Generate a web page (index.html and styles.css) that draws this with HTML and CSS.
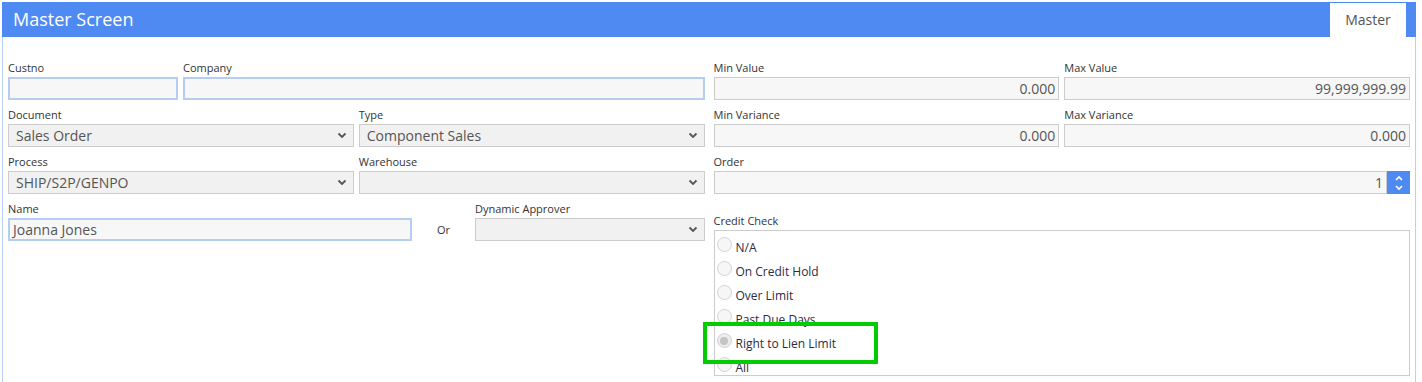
FILE: index.html
```html
<!DOCTYPE html>
<html>
<head>
<meta charset="utf-8">
<link rel="stylesheet" href="styles.css">
</head>
<body>
<div class="panel">
  <div class="header">
    <div class="title">Master Screen</div>
    <div class="tab">Master</div>
  </div>
  <div class="body">
    <div class="col">
      <div class="row r-cust">
        <div class="field"><div class="lbl">Custno</div><div class="inp blue"></div></div>
        <div class="field"><div class="lbl">Company</div><div class="inp blue"></div></div>
      </div>
      <div class="row r-half">
        <div class="field"><div class="lbl">Document</div><div class="sel"><span>Sales Order</span><svg class="chev" width="10" height="7" viewBox="0 0 10 7"><path d="M1.5 1.5 L5 5 L8.5 1.5" fill="none" stroke="#555" stroke-width="1.8"/></svg></div></div>
        <div class="field"><div class="lbl">Type</div><div class="sel"><span>Component Sales</span><svg class="chev" width="10" height="7" viewBox="0 0 10 7"><path d="M1.5 1.5 L5 5 L8.5 1.5" fill="none" stroke="#555" stroke-width="1.8"/></svg></div></div>
      </div>
      <div class="row r-half">
        <div class="field"><div class="lbl">Process</div><div class="sel"><span>SHIP/S2P/GENPO</span><svg class="chev" width="10" height="7" viewBox="0 0 10 7"><path d="M1.5 1.5 L5 5 L8.5 1.5" fill="none" stroke="#555" stroke-width="1.8"/></svg></div></div>
        <div class="field"><div class="lbl">Warehouse</div><div class="sel"><span></span><svg class="chev" width="10" height="7" viewBox="0 0 10 7"><path d="M1.5 1.5 L5 5 L8.5 1.5" fill="none" stroke="#555" stroke-width="1.8"/></svg></div></div>
      </div>
      <div class="row r-name">
        <div class="field"><div class="lbl">Name</div><div class="inp blue name">Joanna Jones</div></div>
        <div class="or">Or</div>
        <div class="field"><div class="lbl">Dynamic Approver</div><div class="sel"><span></span><svg class="chev" width="10" height="7" viewBox="0 0 10 7"><path d="M1.5 1.5 L5 5 L8.5 1.5" fill="none" stroke="#555" stroke-width="1.8"/></svg></div></div>
      </div>
    </div>
    <div class="col">
      <div class="row r-half">
        <div class="field"><div class="lbl">Min Value</div><div class="inp num">0.000</div></div>
        <div class="field"><div class="lbl">Max Value</div><div class="inp num">99,999,999.99</div></div>
      </div>
      <div class="row r-half">
        <div class="field"><div class="lbl">Min Variance</div><div class="inp num">0.000</div></div>
        <div class="field"><div class="lbl">Max Variance</div><div class="inp num">0.000</div></div>
      </div>
      <div class="row">
        <div class="field"><div class="lbl">Order</div>
          <div class="spin-wrap">
            <div class="inp num grow">1</div>
            <div class="spin">
              <svg width="10" height="18" viewBox="0 0 10 18"><path d="M2 6 L5 3 L8 6" fill="none" stroke="#fff" stroke-width="1.6"/><path d="M2 12 L5 15 L8 12" fill="none" stroke="#fff" stroke-width="1.6"/></svg>
            </div>
          </div>
        </div>
      </div>
      <div class="field credit">
        <div class="lbl">Credit Check</div>
        <div class="radios">
          <div class="radio"><span class="dot"></span><span class="rtext">N/A</span></div>
          <div class="radio"><span class="dot"></span><span class="rtext">On Credit Hold</span></div>
          <div class="radio"><span class="dot"></span><span class="rtext">Over Limit</span></div>
          <div class="radio"><span class="dot"></span><span class="rtext">Past Due Days</span></div>
          <div class="radio"><span class="dot on"></span><span class="rtext">Right to Lien Limit</span></div>
          <div class="radio"><span class="dot"></span><span class="rtext">All</span></div>
        </div>
        <div class="highlight"></div>
      </div>
    </div>
  </div>
</div>
</body>
</html>
```

FILE: styles.css
```css
* { box-sizing: border-box; }
html, body { margin: 0; padding: 0; background: #fff; }
body {
  font-family: "Open Sans", "Liberation Sans", sans-serif;
  color: #333;
  overflow: hidden;
  height: 382px;
}
.panel {
  margin: 2px 0 0 2px;
  width: 1414px;
  height: 380px;
  border-left: 1px solid #b9d0f5;
  border-right: 1px solid #b9d0f5;
}
.header {
  margin: 0 -1px;
  height: 35px;
  background: #4f8af2;
  display: flex;
  align-items: flex-end;
  justify-content: space-between;
  padding: 0 10px 0 11px;
}
.title {
  align-self: center;
  color: #fff;
  font-size: 18px;
  line-height: 24px;
  margin-top: -2px;
}
.tab {
  width: 76px;
  height: 34px;
  background: #fff;
  color: #555;
  font-size: 14px;
  display: flex;
  align-items: center;
  justify-content: center;
  padding-bottom: 1px;
}
.body {
  padding: 23px 5px 0 5px;
  display: grid;
  grid-template-columns: 1fr 1fr;
  column-gap: 9px;
}
.col {
  display: flex;
  flex-direction: column;
  gap: 7px;
}
.row { display: grid; column-gap: 5px; }
.r-cust { grid-template-columns: 170px 1fr; }
.r-half { grid-template-columns: 1fr 1fr; }
.r-name { grid-template-columns: 404px 63px 1fr; column-gap: 0; }
.field { display: flex; flex-direction: column; min-width: 0; }
.lbl {
  font-size: 11px;
  line-height: 16px;
  height: 16px;
  margin-bottom: 1px;
  color: #333;
  white-space: nowrap;
}
.inp {
  height: 23px;
  border: 1px solid #ccc;
  background: #f7f7f7;
  font-size: 14px;
  line-height: 21px;
  color: #555;
  padding: 0 3px;
  white-space: nowrap;
}
.inp.blue {
  border: 2px solid #b5cdf2;
  line-height: 19px;
  background: #f7f7f7;
}
.inp.name { padding-left: 3px; }
.num { text-align: right; }
.sel {
  height: 23px;
  border: 1px solid #ccc;
  background: #f1f1f1;
  font-size: 14px;
  line-height: 21px;
  color: #555;
  padding: 0 6px 0 7px;
  display: flex;
  align-items: center;
  justify-content: space-between;
}
.chev { flex: none; }
.or {
  align-self: end;
  height: 23px;
  line-height: 23px;
  font-size: 11px;
  text-align: center;
  color: #333;
}
.spin-wrap { display: flex; }
.grow { flex: 1; }
.spin {
  width: 23px;
  height: 23px;
  background: #4f8af2;
  display: flex;
  align-items: center;
  justify-content: center;
}
.credit {
  position: relative;
  padding-top: 12px;
}
.radios {
  height: 146px;
  border: 1px solid #ccc;
  overflow: hidden;
  padding: 6px 0 0 2px;
  display: flex;
  flex-direction: column;
}
.radio {
  display: flex;
  align-items: flex-start;
  height: 24px;
  flex: none;
}
.dot {
  width: 15px;
  height: 15px;
  border-radius: 50%;
  border: 1px solid #d2d2d2;
  background: #f6f6f6;
  flex: none;
  display: flex;
  align-items: center;
  justify-content: center;
}
.dot.on { background: #ececec; }
.dot.on::after {
  content: "";
  width: 8px;
  height: 8px;
  border-radius: 50%;
  background: #c4c4c4;
}
.rtext {
  font-size: 12px;
  line-height: 16px;
  margin-left: 4px;
  padding-top: 3px;
  color: #2b2b45;
  white-space: nowrap;
}
.highlight {
  position: absolute;
  left: -11px;
  top: 121px;
  width: 175px;
  height: 42px;
  border: 4px solid #00cc00;
}
```
